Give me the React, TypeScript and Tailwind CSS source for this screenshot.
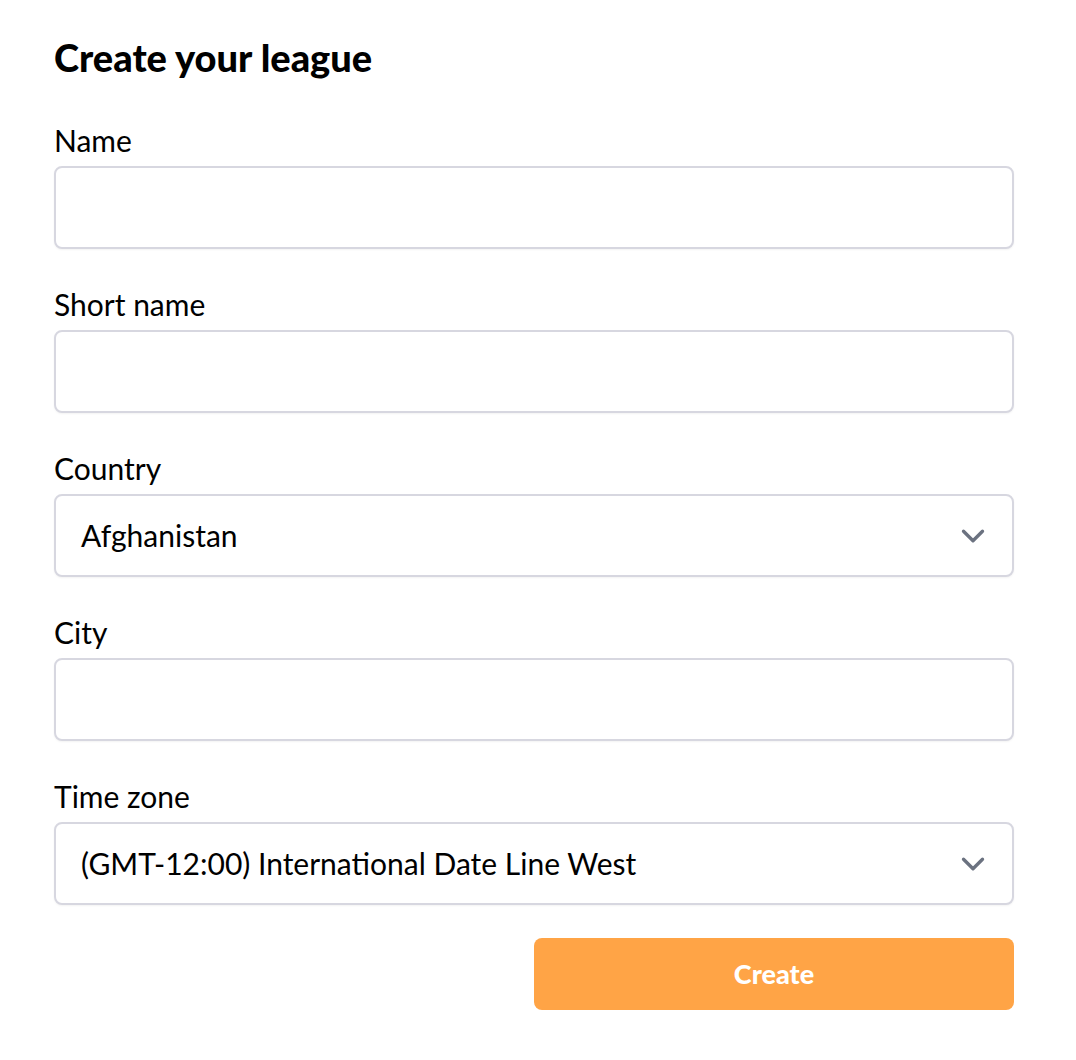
import { ChevronDown } from "lucide-react";

const font = { fontFamily: "Lato, 'Noto Sans', sans-serif" };

function Field({ label, value, select }: { label: string; value?: string; select?: boolean }) {
  return (
    <div className="flex flex-col">
      <label className="text-[30px] leading-[36px] text-black">{label}</label>
      <div className="mt-[8px] h-[83px] flex items-center justify-between rounded-[8px] border-2 border-[#d7d7e0] bg-white pl-[25px] pr-[20px] shadow-[0_1px_2px_rgba(0,0,0,0.05)]">
        <span className="text-[30px] text-black">{value}</span>
        {select && <ChevronDown className="h-[38px] w-[38px] text-[#6b7280]" strokeWidth={2.1} />}
      </div>
    </div>
  );
}

export default function App() {
  return (
    <div className="min-h-[1060px] bg-white" style={font}>
      <div className="w-[960px] ml-[54px] pt-[35px] flex flex-col">
        <h1 className="text-[38px] leading-[44px] font-black text-black">Create your league</h1>
        <div className="mt-[43px] flex flex-col gap-[37px]">
          <Field label="Name" />
          <Field label="Short name" />
          <Field label="Country" value="Afghanistan" select />
          <Field label="City" />
          <Field label="Time zone" value="(GMT-12:00) International Date Line West" select />
        </div>
        <div className="mt-[33px] flex justify-end">
          <button className="h-[72px] w-[480px] rounded-[8px] bg-[#ffa446] text-[27px] font-black text-white">Create</button>
        </div>
      </div>
    </div>
  );
}
